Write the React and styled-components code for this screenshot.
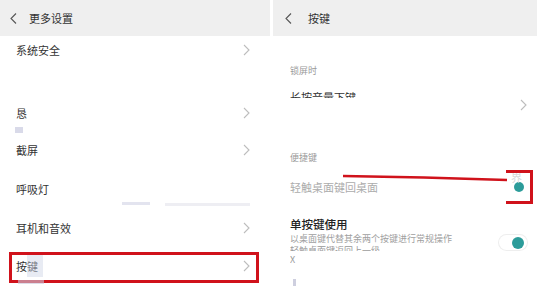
import React from "react";
import styled, { createGlobalStyle } from "styled-components";

const Global = createGlobalStyle`
  html, body { margin: 0; padding: 0; background: #fff; }
  body { font-family: "Noto Sans CJK SC", "Noto Sans", sans-serif; color: #333; }
  #root { width: 537px; height: 292px; overflow: hidden; }
`;

const Screen = styled.div`
  display: flex;
  gap: 3px;
  width: 537px;
  height: 292px;
  background: #fff;
`;

const Panel = styled.div`
  position: relative;
  width: ${(p) => p.$w}px;
  display: flex;
  flex-direction: column;
  overflow: hidden;
`;

const Header = styled.div`
  height: 36px;
  background: #efefef;
  display: flex;
  align-items: center;
  gap: ${(p) => p.$gap}px;
  padding-left: ${(p) => p.$pad}px;
  box-sizing: border-box;
  font-size: 11px;
  color: #333;
  flex-shrink: 0;
`;

const Row = styled.div`
  position: relative;
  height: ${(p) => p.$h}px;
  display: flex;
  align-items: center;
  justify-content: space-between;
  padding: 0 20px 0 16px;
  font-size: 11px;
  color: #333;
  flex-shrink: 0;
  ${(p) =>
    p.$marked &&
    `
    &::after {
      content: "";
      position: absolute;
      left: 9px;
      right: 11px;
      top: 5px;
      bottom: 2px;
      border: 3px solid #d0121b;
    }
  `}
`;

const Spacer = styled.div`
  height: ${(p) => p.$h}px;
  flex-shrink: 0;
`;

const Blob = styled.div`
  position: absolute;
  left: ${(p) => p.$x}px;
  top: ${(p) => p.$y}px;
  width: ${(p) => p.$w}px;
  height: ${(p) => p.$h}px;
  background: ${(p) => p.$c || "#c9cbe0"};
  opacity: ${(p) => p.$o || 0.7};
  filter: blur(0.6px);
`;

const SectionLabel = styled.div`
  height: 16px;
  margin-top: ${(p) => p.$mt}px;
  padding-left: 17px;
  font-size: 9px;
  line-height: 16px;
  color: #9a9a9a;
  flex-shrink: 0;
`;

const RRow = styled.div`
  position: relative;
  height: ${(p) => p.$h}px;
  display: flex;
  align-items: center;
  justify-content: space-between;
  padding: 0 10px 0 17px;
  flex-shrink: 0;
`;

const ClipText = styled.div`
  align-self: flex-start;
  margin-top: ${(p) => p.$mt}px;
  height: ${(p) => p.$h}px;
  overflow: hidden;
  font-size: 11px;
  line-height: 12px;
  color: #333;
`;

const Label = styled.span`
  font-size: 11px;
  color: ${(p) => p.$c || "#333"};
`;

const Block = styled.div`
  display: flex;
  flex-direction: column;
  align-self: flex-start;
  padding-top: 8px;
`;

const Title = styled.div`
  font-size: 11.5px;
  line-height: 16px;
  font-weight: 500;
  color: #222;
`;

const Sub = styled.div`
  font-size: 9px;
  line-height: 13px;
  color: #a0a0a0;
`;

const Clip = styled.div`
  height: ${(p) => p.$h}px;
  margin-top: ${(p) => p.$mt || 0}px;
  overflow: hidden;
  font-size: 9px;
  line-height: 12px;
  color: #999;
`;

const Track = styled.div`
  position: relative;
  width: 28px;
  height: 15px;
  border-radius: 8px;
  background: ${(p) => (p.$plain ? "transparent" : "#fff")};
  box-shadow: ${(p) => (p.$plain ? "none" : "0 0 0 1px #eeeeee")};
  display: flex;
  align-items: center;
  justify-content: flex-end;
  padding-right: 3px;
  box-sizing: border-box;
  align-self: ${(p) => (p.$top ? "flex-start" : "center")};
  margin-top: ${(p) => p.$mt || 0}px;
`;

const Knob = styled.div`
  width: ${(p) => p.$s}px;
  height: ${(p) => p.$s}px;
  border-radius: 50%;
  background: #2c9c9a;
`;

const Bracket = styled.div`
  position: absolute;
  left: 233px;
  top: 170px;
  width: 27px;
  height: 34px;
  border: 3px solid #d0121b;
  border-left: none;
  box-sizing: border-box;
`;

const GhostGlyph = styled.div`
  position: absolute;
  left: 238px;
  top: 172px;
  font-size: 11px;
  line-height: 11px;
  color: #d8d8d8;
`;

const Overlay = styled.svg`
  position: absolute;
  left: 0;
  top: 0;
  pointer-events: none;
`;

const Chevron = () => (
  <svg width="7" height="12" viewBox="0 0 7 12">
    <polyline points="1,1 6,6 1,11" fill="none" stroke="#bdbdbd" strokeWidth="1.1" />
  </svg>
);

const Back = () => (
  <svg width="7" height="11" viewBox="0 0 7 11">
    <polyline points="6,0.5 1,5.5 6,10.5" fill="none" stroke="#555" strokeWidth="1.1" />
  </svg>
);

export default function App() {
  return (
    <>
      <Global />
      <Screen>
        <Panel $w={270}>
          <Header $pad={10} $gap={12}>
            <Back />
            <span>更多设置</span>
          </Header>
          <Row $h={28}>
            <span>系统安全</span>
            <Chevron />
          </Row>
          <Spacer $h={31} />
          <Row $h={36}>
            <span>恳</span>
            <Chevron />
          </Row>
          <Row $h={38}>
            <span>截屏</span>
            <Chevron />
          </Row>
          <Row $h={39}>
            <span>呼吸灯</span>
          </Row>
          <Row $h={39}>
            <span>耳机和音效</span>
            <Chevron />
          </Row>
          <Row $h={38} $marked>
            <span>按键</span>
            <Chevron />
          </Row>
          <Blob $x={15} $y={127} $w={8} $h={6} />
          <Blob $x={122} $y={202} $w={28} $h={3} $o={0.5} />
          <Blob $x={165} $y={203} $w={85} $h={3} $c="#e4e4ec" $o={0.6} />
          <Blob $x={27} $y={255} $w={16} $h={22} $c="#cdd3e6" $o={0.45} />
          <Blob $x={18} $y={280} $w={26} $h={4} $c="#c9c8dc" $o={0.6} />
        </Panel>
        <Panel $w={264}>
          <Header $pad={12} $gap={16}>
            <Back />
            <span>按键</span>
          </Header>
          <SectionLabel $mt={27}>锁屏时</SectionLabel>
          <RRow $h={52}>
            <ClipText $mt={12} $h={7}>长按音量下键</ClipText>
            <Chevron />
          </RRow>
          <SectionLabel $mt={19}>便捷键</SectionLabel>
          <RRow $h={42}>
            <Label $c="#acacac">轻触桌面键回桌面</Label>
            <Track $plain>
              <Knob $s={10} />
            </Track>
          </RRow>
          <RRow $h={84}>
            <Block>
              <Title>单按键使用</Title>
              <Sub>以桌面键代替其余两个按键进行常规操作</Sub>
              <Clip $h={6}>轻触桌面键返回上一级</Clip>
              <Clip $h={12} $mt={3}>X</Clip>
            </Block>
            <Track $top $mt={27}>
              <Knob $s={12} />
            </Track>
          </RRow>
          <GhostGlyph>界</GhostGlyph>
          <Bracket />
          <Overlay width="264" height="292">
            <path d="M70 176 Q 150 177 234 180" fill="none" stroke="#d0121b" strokeWidth="2.5" />
          </Overlay>
          <Blob $x={20} $y={279} $w={3} $h={7} $c="#c2c4d8" $o={0.8} />
        </Panel>
      </Screen>
    </>
  );
}
